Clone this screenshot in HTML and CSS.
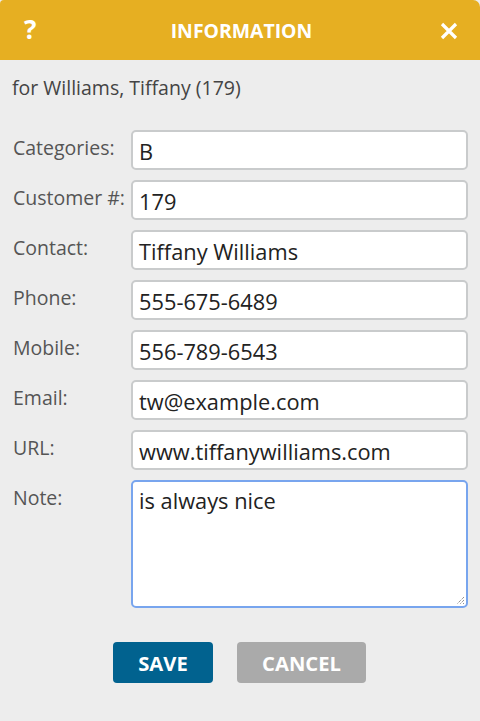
FILE: index.html
```html
<!DOCTYPE html>
<html>
<head>
<meta charset="utf-8">
<link rel="stylesheet" href="styles.css">
</head>
<body>
<div class="dialog">
  <div class="header">
    <span class="help">?</span>
    <span class="title">INFORMATION</span>
    <svg class="close" width="18" height="18" viewBox="0 0 18 18"><path d="M2 2L16 16M16 2L2 16" stroke="#fff" stroke-width="3.2" stroke-linecap="butt"/></svg>
  </div>
  <div class="sub">for Williams, Tiffany (179)</div>
  <div class="form">
    <div class="row"><label>Categories:</label><div class="field">B</div></div>
    <div class="row"><label>Customer #:</label><div class="field">179</div></div>
    <div class="row"><label>Contact:</label><div class="field">Tiffany Williams</div></div>
    <div class="row"><label>Phone:</label><div class="field">555-675-6489</div></div>
    <div class="row"><label>Mobile:</label><div class="field">556-789-6543</div></div>
    <div class="row"><label>Email:</label><div class="field">tw@example.com</div></div>
    <div class="row"><label>URL:</label><div class="field">www.tiffanywilliams.com</div></div>
    <div class="row"><label>Note:</label><div class="field area">is always nice<svg class="grip" width="10" height="10" viewBox="0 0 10 10"><path d="M9 2L2 9M9 5L5 9M9 8L8 9" stroke="#666" stroke-width="1" stroke-dasharray="1 1"/></svg></div></div>
  </div>
  <div class="buttons">
    <div class="btn save">SAVE</div>
    <div class="btn cancel">CANCEL</div>
  </div>
</div>
</body>
</html>
```
FILE: styles.css
```css
html, body { margin: 0; padding: 0; background: #ededed; }
body { font-family: "Open Sans", sans-serif; width: 480px; height: 721px; overflow: hidden; }
.dialog { width: 480px; }
.header {
  height: 60px; background: #e6af22; border-radius: 4px 7px 0 0;
  display: flex; align-items: center; justify-content: space-between;
  padding: 0 22px 0 24px; box-sizing: border-box; color: #fff;
}
.help { font-weight: 700; font-size: 26px; width: 18px; margin-top: -2px; }
.title { font-weight: 700; font-size: 19.4px; margin-left: 1px; }
.close { display: block; margin-top: 1px; }
.sub { padding: 0 12px; height: 55px; line-height: 55px; font-size: 19.5px; color: #444; }
.form { padding: 15px 13px 0 13px; display: flex; flex-direction: column; gap: 10px; }
.row { display: flex; align-items: flex-start; }
.row label { width: 118px; font-size: 19.5px; color: #555; line-height: 24px; padding-top: 6px; white-space: nowrap; }
.field {
  flex: 1; height: 40px; box-sizing: border-box; background: #fff;
  border: 2px solid #c9cbcc; border-radius: 5px; font-size: 21.8px; color: #222;
  padding: 3px 0 0 6px; line-height: 34px; margin-right: -1px; white-space: nowrap;
}
.area { height: 128px; border-color: #78a5ee; position: relative; line-height: 30px; padding-top: 4px; }
.grip { position: absolute; right: 1px; bottom: 1px; }
.buttons { display: flex; justify-content: center; gap: 24px; padding-top: 34px; margin-left: -1px; }
.btn {
  height: 41px; border-radius: 4px; color: #fff; font-weight: 700; font-size: 20.2px;
  display: flex; align-items: center; justify-content: center;
}
.save { width: 100px; background: #01628f; }
.cancel { width: 129px; background: #aaaaaa; }
```
